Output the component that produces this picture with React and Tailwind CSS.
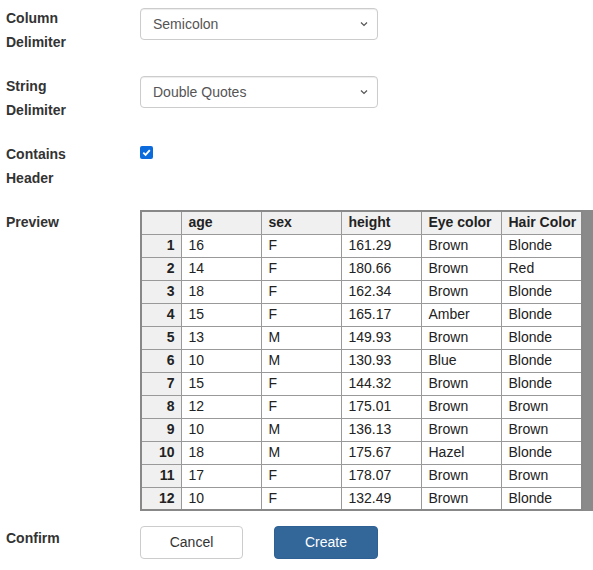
import React from "react";

const rows = [
  [16, "F", "161.29", "Brown", "Blonde"],
  [14, "F", "180.66", "Brown", "Red"],
  [18, "F", "162.34", "Brown", "Blonde"],
  [15, "F", "165.17", "Amber", "Blonde"],
  [13, "M", "149.93", "Brown", "Blonde"],
  [10, "M", "130.93", "Blue", "Blonde"],
  [15, "F", "144.32", "Brown", "Blonde"],
  [12, "F", "175.01", "Brown", "Brown"],
  [10, "M", "136.13", "Brown", "Brown"],
  [18, "M", "175.67", "Hazel", "Blonde"],
  [17, "F", "178.07", "Brown", "Brown"],
  [10, "F", "132.49", "Brown", "Blonde"],
];

function Label({ children }) {
  return (
    <div className="w-[140px] shrink-0 pl-[6px] text-[14px] font-bold leading-6 text-[#333]">
      {children}
    </div>
  );
}

function Select({ value }) {
  return (
    <div className="mt-[2px] flex h-[32px] w-[238px] items-center justify-between rounded-[4px] border border-[#ccc] bg-white pl-[12px] pr-[8px] text-[14px] text-[#555] shadow-[inset_0_1px_1px_rgba(0,0,0,0.075)]">
      <span>{value}</span>
      <svg width="10" height="10" viewBox="0 0 10 10" fill="none" stroke="#555" strokeWidth="1.2">
        <path d="M2 3.5 L5 6.5 L8 3.5" />
      </svg>
    </div>
  );
}

export default function App() {
  return (
    <div className="h-[570px] w-[593px] overflow-hidden bg-white pt-[6px] font-['Liberation_Sans',Arial,sans-serif] text-[#333]">
      <div className="flex h-[68px]">
        <Label>
          Column
          <br />
          Delimiter
        </Label>
        <Select value="Semicolon" />
      </div>
      <div className="flex h-[68px]">
        <Label>
          String
          <br />
          Delimiter
        </Label>
        <Select value="Double Quotes" />
      </div>
      <div className="flex h-[68px]">
        <Label>
          Contains
          <br />
          Header
        </Label>
        <div className="mt-[4px] flex h-[13px] w-[13px] items-center justify-center rounded-[2px] bg-[#0b6bdc]">
          <svg width="11" height="11" viewBox="0 0 12 12" fill="none" stroke="white" strokeWidth="2">
            <path d="M2.5 6.2 L5 8.6 L9.6 3.4" />
          </svg>
        </div>
      </div>
      <div className="flex">
        <Label>Preview</Label>
        <div className="flex">
          <table className="w-[441px] table-fixed border-collapse border-2 border-[#888] text-[14px] leading-[21px] text-[#222]">
            <colgroup>
              <col className="w-[40px]" />
              <col className="w-[80px]" />
              <col className="w-[80px]" />
              <col className="w-[80px]" />
              <col className="w-[80px]" />
              <col className="w-[81px]" />
            </colgroup>
            <thead>
              <tr className="h-[23px]">
                <th className="border border-[#999] bg-[#f0f0f0] p-0"></th>
                {["age", "sex", "height", "Eye color", "Hair Color"].map((h) => (
                  <th
                    key={h}
                    className="overflow-hidden whitespace-nowrap border border-[#999] bg-[#f0f0f0] px-[7px] py-0 text-left font-bold text-[#222]"
                  >
                    {h}
                  </th>
                ))}
              </tr>
            </thead>
            <tbody>
              {rows.map((r, i) => (
                <tr key={i} className="h-[23px]">
                  <td className="border border-[#999] bg-[#f0f0f0] py-0 pl-0 pr-[6px] text-right font-bold text-[#222]">
                    {i + 1}
                  </td>
                  {r.map((c, j) => (
                    <td key={j} className="whitespace-nowrap border border-[#999] bg-white px-[7px] py-0 text-left">
                      {c}
                    </td>
                  ))}
                </tr>
              ))}
            </tbody>
          </table>
          <div className="w-[12px] shrink-0 bg-[#8a8a8a]" />
        </div>
      </div>
      <div className="mt-[15px] flex">
        <Label>Confirm</Label>
        <div className="flex gap-[31px]">
          <button className="h-[33px] w-[103px] rounded-[4px] border border-[#ccc] bg-white text-[14px] text-[#333]">
            Cancel
          </button>
          <button className="h-[33px] w-[104px] rounded-[4px] border border-[#2e6093] bg-[#336699] text-[14px] text-white">
            Create
          </button>
        </div>
      </div>
    </div>
  );
}
